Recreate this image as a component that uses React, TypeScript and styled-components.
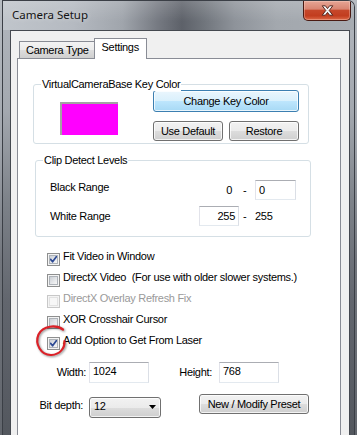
import React from "react";
import styled, { createGlobalStyle } from "styled-components";

const GlobalStyle = createGlobalStyle`
  html, body { margin: 0; padding: 0; }
  body {
    width: 357px;
    height: 435px;
    overflow: hidden;
    background: linear-gradient(to bottom, #b7bcc2 0px, #a2a7ae 140px, #72767d 260px, #62666d 435px);
    font-family: "Liberation Sans", Arial, sans-serif;
  }
  #root { width: 357px; height: 435px; }
`;

const Window = styled.div`
  box-sizing: border-box;
  margin-left: 2px;
  width: 353px;
  height: 435px;
  border: 1px solid #3b3f46;
  border-bottom: none;
  border-top-right-radius: 7px;
  display: flex;
  flex-direction: column;
  overflow: hidden;
  background: linear-gradient(to bottom, #b2b7be 0px, #a3a8af 110px, #7d8289 200px, #62666e 300px, #53575e 435px);
`;

const TitleBar = styled.div`
  height: 29px;
  flex: none;
  display: flex;
  justify-content: space-between;
  align-items: flex-start;
  padding: 0 3px 0 9px;
  background:
    linear-gradient(to bottom, rgba(255, 255, 255, 0.16), rgba(255, 255, 255, 0) 70%),
    linear-gradient(90deg, #c0c5cb 0%, #b5bac1 20%, #a0a5ac 34%, #767a82 44%, #5d6169 51%, #6f747b 57%, #8e939a 66%, #a3a8ae 78%, #a7acb2 100%);
`;

const TitleText = styled.span`
  align-self: center;
  font-family: "Noto Sans", "Open Sans", sans-serif;
  font-size: 11.5px;
  line-height: 16px;
  margin-bottom: 1px;
  color: #141414;
  text-shadow: 0 0 5px rgba(255, 255, 255, 0.55);
`;

const CloseButton = styled.div`
  box-sizing: border-box;
  width: 48px;
  height: 20px;
  display: flex;
  align-items: center;
  justify-content: center;
  border: 1px solid #4a1a12;
  border-top: none;
  border-radius: 0 0 5px 5px;
  background: linear-gradient(to bottom, #e6a595 0%, #d98572 42%, #c6472a 50%, #c23d1f 78%, #dd6a48 100%);
  box-shadow: inset 0 0 0 1px rgba(255, 220, 210, 0.35);
`;

const Client = styled.div`
  flex: 1;
  min-height: 0;
  margin: 0 4px 0 7px;
  border: 1px solid #454950;
  border-bottom: none;
  background: #f0f0f0;
  padding: 7px 8px 0 6px;
  display: flex;
  flex-direction: column;
`;

const TabStrip = styled.div`
  flex: none;
  height: 20px;
  display: flex;
  align-items: flex-end;
  padding-left: 2px;
`;

const Tab = styled.div<{ $active?: boolean }>`
  box-sizing: border-box;
  position: relative;
  height: ${(p) => (p.$active ? 21 : 17)}px;
  margin: ${(p) => (p.$active ? "0 -2px -1px -2px" : "0")};
  z-index: ${(p) => (p.$active ? 1 : 0)};
  padding: 2px ${(p) => (p.$active ? 7 : 6)}px 0;
  border: 1px solid #898c95;
  border-bottom: none;
  background: ${(p) =>
    p.$active
      ? "#ffffff"
      : "linear-gradient(to bottom, #f3f3f3 0%, #ebebeb 50%, #dddddd 50%, #cfcfcf 100%)"};
  font-size: 11px;
  line-height: 13px;
  letter-spacing: -0.3px;
  color: #000;
  white-space: nowrap;
`;

const Panel = styled.div`
  flex: 1;
  border: 1px solid #898c95;
  border-bottom: none;
  background: #ffffff;
  padding-top: 25px;
  display: flex;
  flex-direction: column;
  align-items: flex-start;
`;

const Group = styled.div<{ $left: number; $top?: number }>`
  position: relative;
  box-sizing: border-box;
  width: 276px;
  margin-left: ${(p) => p.$left}px;
  margin-top: ${(p) => p.$top ?? 0}px;
  border: 1px solid #d5dfe5;
  border-radius: 3px;
`;

const GroupLabel = styled.span`
  position: absolute;
  top: -7px;
  left: 7px;
  padding: 0 1px;
  background: #ffffff;
  font-size: 11px;
  line-height: 13px;
  letter-spacing: -0.3px;
  color: #000;
  white-space: nowrap;
`;

const KeyColorBody = styled.div`
  display: flex;
  gap: 35px;
  padding: 5px 9px 2px 26px;
`;

const Swatch = styled.div`
  box-sizing: border-box;
  width: 58px;
  height: 33px;
  margin-top: 12px;
  border-top: 2px solid #a3a3a3;
  border-left: 2px solid #a3a3a3;
  background: #ff00ff;
`;

const ButtonColumn = styled.div`
  width: 146px;
  display: flex;
  flex-direction: column;
  gap: 9px;
`;

const ButtonRow = styled.div`
  display: flex;
  gap: 6px;
`;

const Button = styled.div<{ $primary?: boolean; $w: number; $h: number }>`
  box-sizing: border-box;
  width: ${(p) => p.$w}px;
  height: ${(p) => p.$h}px;
  border: 1px solid ${(p) => (p.$primary ? "#3c7fb1" : "#707070")};
  border-radius: 3px;
  background: ${(p) =>
    p.$primary
      ? "linear-gradient(to bottom, #eaf6fd 0%, #d9f0fc 50%, #bee6fd 50%, #a7d9f5 100%)"
      : "linear-gradient(to bottom, #f2f2f2 0%, #ebebeb 50%, #dddddd 50%, #cfcfcf 100%)"};
  box-shadow: inset 0 0 0 1px rgba(255, 255, 255, 0.75);
  font-size: 11px;
  line-height: ${(p) => p.$h - 2}px;
  letter-spacing: -0.3px;
  text-align: center;
  color: #000;
  white-space: nowrap;
`;

const ClipBody = styled.div`
  display: grid;
  grid-template-columns: 149px 40px 16px 41px;
  grid-auto-rows: 20px;
  row-gap: 6px;
  align-items: start;
  padding: 19px 0 10px 14px;
`;

const Text = styled.span<{ $align?: "left" | "right"; $padR?: number; $padL?: number; $raise?: number; $color?: string }>`
  display: block;
  font-size: 11px;
  line-height: 20px;
  letter-spacing: -0.3px;
  color: ${(p) => p.$color ?? "#000"};
  text-align: ${(p) => p.$align ?? "left"};
  padding-right: ${(p) => p.$padR ?? 0}px;
  padding-left: ${(p) => p.$padL ?? 0}px;
  margin-top: ${(p) => -(p.$raise ?? 0)}px;
  white-space: pre;
`;

const TextBox = styled.div<{ $h: number; $right?: boolean; $lh: number }>`
  box-sizing: border-box;
  height: ${(p) => p.$h}px;
  border: 1px solid;
  border-color: #abadb3 #dbdfe6 #e3e9ef #e2e3ea;
  background: #ffffff;
  padding: 0 ${(p) => (p.$right ? 3 : 0)}px 0 ${(p) => (p.$right ? 0 : 3)}px;
  text-align: ${(p) => (p.$right ? "right" : "left")};
  font-size: 11px;
  line-height: ${(p) => p.$lh}px;
  letter-spacing: -0.3px;
  color: #000;
`;

const CheckList = styled.div`
  margin: 12px 0 0 29px;
  display: flex;
  flex-direction: column;
`;

const CheckRow = styled.div`
  position: relative;
  height: 21px;
  display: flex;
  align-items: flex-start;
  gap: 3px;
`;

const Box = styled.span<{ $disabled?: boolean }>`
  box-sizing: border-box;
  flex: none;
  width: 13px;
  height: 13px;
  margin-top: 4px;
  padding: 1px;
  border: 1px solid ${(p) => (p.$disabled ? "#c8c8c8" : "#8e8f8f")};
  background: #f4f4f4;
  display: flex;
`;

const BoxInner = styled.span<{ $disabled?: boolean }>`
  flex: 1;
  display: flex;
  border: 1px solid ${(p) => (p.$disabled ? "#e2e2e2" : "#aeb3b9")};
  background: ${(p) =>
    p.$disabled
      ? "#f7f7f7"
      : "linear-gradient(135deg, #cbcfd5 0%, #e4e6e9 55%, #f7f7f7 100%)"};
`;

const CheckLabel = styled.span<{ $disabled?: boolean }>`
  font-size: 11px;
  line-height: 13px;
  padding-top: 1px;
  letter-spacing: -0.3px;
  color: ${(p) => (p.$disabled ? "#9a9a9a" : "#000")};
  white-space: pre;
`;

const Annotation = styled.svg`
  position: absolute;
  left: -13px;
  top: -9px;
  width: 34px;
  height: 34px;
  overflow: visible;
  filter: drop-shadow(1px 1px 1.2px rgba(0, 0, 0, 0.45));
  pointer-events: none;
`;

const SizeRow = styled.div`
  margin-top: 8px;
  display: grid;
  grid-template-columns: 71px 60px 70px 60px;
  align-items: start;
  height: 21px;
`;

const BottomRow = styled.div`
  margin-top: 11px;
  display: grid;
  grid-template-columns: 71px 72px 38px 110px;
  align-items: start;
`;

const FieldLabel = styled.span<{ $padR: number; $top?: number }>`
  display: block;
  text-align: right;
  padding-right: ${(p) => p.$padR}px;
  margin-top: ${(p) => p.$top ?? 0}px;
  font-size: 11px;
  line-height: 21px;
  letter-spacing: -0.3px;
  color: #000;
  white-space: nowrap;
`;

const Select = styled.div`
  box-sizing: border-box;
  height: 21px;
  margin-top: 3px;
  display: flex;
  align-items: flex-start;
  justify-content: space-between;
  padding: 0 4px 0 4px;
  border: 1px solid #707070;
  border-radius: 3px;
  background: linear-gradient(to bottom, #f2f2f2 0%, #ebebeb 50%, #dddddd 50%, #cfcfcf 100%);
  box-shadow: inset 0 0 0 1px rgba(255, 255, 255, 0.75);
  font-size: 11px;
  line-height: 17px;
  letter-spacing: -0.3px;
  color: #000;
`;

const Arrow = styled.svg`
  margin-top: 7px;
  flex: none;
`;

const Check = ({ checked, disabled, label, circled }: { checked?: boolean; disabled?: boolean; label: string; circled?: boolean }) => (
  <CheckRow>
    <Box $disabled={disabled}>
      <BoxInner $disabled={disabled}>
        {checked && (
          <svg width="7" height="7" viewBox="0 0 7 7">
            <path d="M0.6 3.4 L2.6 5.8 L6.5 0.6" fill="none" stroke="#2d4a94" strokeWidth="1.7" strokeLinecap="round" strokeLinejoin="round" />
          </svg>
        )}
      </BoxInner>
    </Box>
    <CheckLabel $disabled={disabled}>{label}</CheckLabel>
    {circled && (
      <Annotation viewBox="34 324 34 34">
        <path
          d="M63 329.5 C56 324.5 43 325.5 38.5 334.5 C34.5 344 41 355.5 51.5 355 C59.5 354.5 65 348.5 64.5 341"
          fill="none"
          stroke="#dc2128"
          strokeWidth="2.2"
          strokeLinecap="round"
        />
      </Annotation>
    )}
  </CheckRow>
);

export default function App() {
  return (
    <>
      <GlobalStyle />
      <Window>
        <TitleBar>
          <TitleText>Camera Setup</TitleText>
          <CloseButton>
            <svg width="13" height="11" viewBox="0 0 13 11">
              <path
                d="M1.2 0.8 H4.4 L6.5 3.6 L8.6 0.8 H11.8 L8.2 5.5 L11.8 10.2 H8.6 L6.5 7.4 L4.4 10.2 H1.2 L4.8 5.5 Z"
                fill="#f4f4f4"
                stroke="#4a1c14"
                strokeWidth="0.9"
                strokeLinejoin="round"
              />
            </svg>
          </CloseButton>
        </TitleBar>
        <Client>
          <TabStrip>
            <Tab>Camera Type</Tab>
            <Tab $active>Settings</Tab>
          </TabStrip>
          <Panel>
            <Group $left={15}>
              <GroupLabel>VirtualCameraBase Key Color</GroupLabel>
              <KeyColorBody>
                <Swatch />
                <ButtonColumn>
                  <Button $primary $w={146} $h={22}>Change Key Color</Button>
                  <ButtonRow>
                    <Button $w={70} $h={20}>Use Default</Button>
                    <Button $w={70} $h={20}>Restore</Button>
                  </ButtonRow>
                </ButtonColumn>
              </KeyColorBody>
            </Group>
            <Group $left={17} $top={16}>
              <GroupLabel>Clip Detect Levels</GroupLabel>
              <ClipBody>
                <Text $raise={3}>Black Range</Text>
                <Text $align="right" $padR={7}>0</Text>
                <Text $padL={4}>-</Text>
                <TextBox $h={20} $lh={18}>0</TextBox>
                <Text>White Range</Text>
                <TextBox $h={20} $lh={18} $right>255</TextBox>
                <Text $padL={4}>-</Text>
                <Text>255</Text>
              </ClipBody>
            </Group>
            <CheckList>
              <Check checked label="Fit Video in Window" />
              <Check label={"DirectX Video  (For use with older slower systems.)"} />
              <Check disabled label="DirectX Overlay Refresh Fix" />
              <Check label="XOR Crosshair Cursor" />
              <Check checked circled label="Add Option to Get From Laser" />
            </CheckList>
            <SizeRow>
              <FieldLabel $padR={3}>Width:</FieldLabel>
              <TextBox $h={21} $lh={17}>1024</TextBox>
              <FieldLabel $padR={7}>Height:</FieldLabel>
              <TextBox $h={21} $lh={17}>768</TextBox>
            </SizeRow>
            <BottomRow>
              <FieldLabel $padR={6} $top={1}>Bit depth:</FieldLabel>
              <Select>
                <span>12</span>
                <Arrow width="7" height="4" viewBox="0 0 7 4">
                  <path d="M0 0 H7 L3.5 4 Z" fill="#000" />
                </Arrow>
              </Select>
              <span />
              <Button $w={110} $h={20}>New / Modify Preset</Button>
            </BottomRow>
          </Panel>
        </Client>
      </Window>
    </>
  );
}
